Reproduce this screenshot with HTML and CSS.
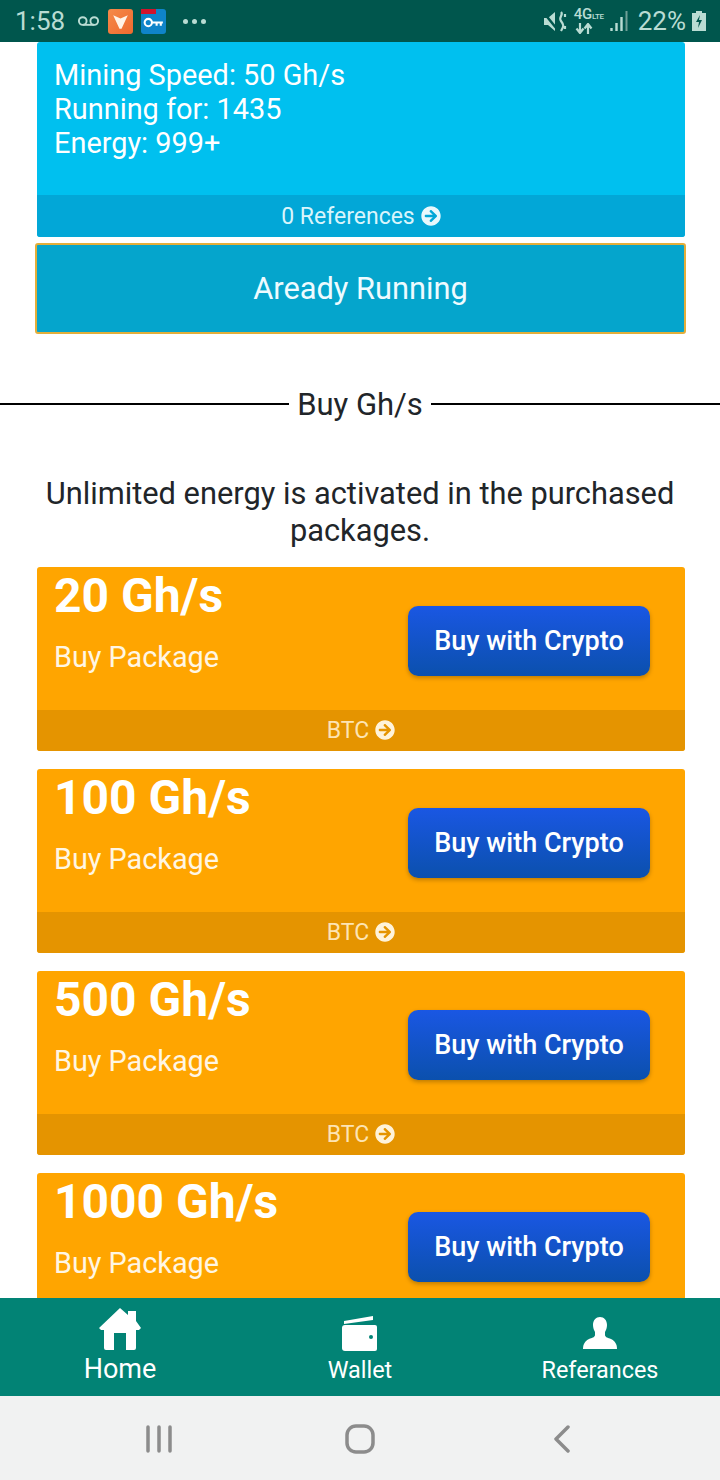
FILE: index.html
```html
<!DOCTYPE html>
<html lang="en">
<head>
<meta charset="utf-8">
<title>Mining</title>
<link rel="stylesheet" href="styles.css">
</head>
<body>
<div class="phone">
  <header class="status">
    <span class="time">1:58</span>
    <svg class="vm" viewBox="0 0 24 12"><circle cx="6" cy="6" r="4" /><circle cx="18" cy="6" r="4" /><path d="M6 10h12" /></svg>
    <span class="app app-orange"><svg viewBox="0 0 24 24"><path d="M5 6l7 3 7-3-6 13h-2z" fill="#fff3e8"/></svg></span>
    <span class="app app-blue"><i class="tag"></i><svg viewBox="0 0 24 24"><circle cx="7" cy="13" r="3.500" fill="none" stroke="#fff" stroke-width="2"/><path d="M10 13h11M15 13v3M19 13v3" stroke="#fff" stroke-width="2" fill="none"/></svg></span>
    <span class="dots"><i></i><i></i><i></i></span>
    <span class="status-right">
      <svg class="mute" viewBox="0 0 23 21"><path d="M0 7h4l7-6v19l-7-6H0z" fill="#b9dcd3"/><path d="M0 2l13 16" stroke="#00564d" stroke-width="2.500"/><path d="M17 1c3 3-3 5 0 9s3 5 0 10M21 3v3M21 15v3" stroke="#b9dcd3" stroke-width="2.200" fill="none"/></svg>
      <span class="net"><span class="net-top">4G<small>LTE</small></span><svg class="net-arrows" viewBox="0 0 18 11"><path d="M5 0v9M1.500 5.500L5 10l3.500-4.500M13 11V2M9.500 5.500L13 1l3.500 4.500" fill="none" stroke="#b9dcd3" stroke-width="2.200"/></svg></span>
      <svg class="signal" viewBox="0 0 18 20"><path d="M1.500 17v3M6.500 12v8M11.500 6v14" stroke="#b9dcd3" stroke-width="2.400"/><path d="M16.500 0v20" stroke="#6f9f97" stroke-width="2"/></svg>
      <span class="pct">22%</span>
      <svg class="batt" viewBox="0 0 14 20"><path d="M4 0h6v2h4v18H0V2h4z" fill="#b9dcd3"/><path d="M8 4l-4 7h3l-1 6 4-8H7z" fill="#00564d"/></svg>
    </span>
  </header>

  <main class="content">
    <section class="card card-blue">
      <div class="stats">
        <div>Mining Speed: 50 Gh/s</div>
        <div>Running for: 1435</div>
        <div>Energy: 999+</div>
      </div>
      <div class="card-foot foot-blue">0 References
        <svg class="arrow" viewBox="0 0 512 512"><path d="M256 8c137 0 248 111 248 248S393 504 256 504 8 393 8 256 119 8 256 8zm-28.900 143.600l75.500 72.400H120c-13.300 0-24 10.700-24 24v16c0 13.300 10.700 24 24 24h182.600l-75.500 72.400c-9.700 9.300-9.900 24.800-.4 34.300l11 10.900c9.400 9.400 24.600 9.400 33.900 0L404.300 273c9.400-9.400 9.400-24.600 0-33.900L271.600 106.300c-9.400-9.400-24.600-9.400-33.900 0l-11 10.900c-9.500 9.700-9.300 25.200.4 34.400z"/></svg>
      </div>
    </section>
    <div class="running">Aready Running</div>
    <div class="divider"><span>Buy Gh/s</span></div>
    <p class="notice">Unlimited energy is activated in the purchased packages.</p>

    <section class="card card-orange">
      <div class="pack">
        <div class="pack-info"><h2>20 Gh/s</h2><p>Buy Package</p></div>
        <button class="buy">Buy with Crypto</button>
      </div>
      <div class="card-foot foot-orange">BTC
        <svg class="arrow" viewBox="0 0 512 512"><path d="M256 8c137 0 248 111 248 248S393 504 256 504 8 393 8 256 119 8 256 8zm-28.900 143.600l75.500 72.400H120c-13.300 0-24 10.700-24 24v16c0 13.300 10.700 24 24 24h182.600l-75.500 72.400c-9.700 9.300-9.900 24.800-.4 34.300l11 10.900c9.400 9.400 24.600 9.400 33.900 0L404.300 273c9.400-9.400 9.400-24.600 0-33.900L271.600 106.300c-9.400-9.400-24.600-9.400-33.900 0l-11 10.900c-9.500 9.700-9.300 25.200.4 34.400z"/></svg>
      </div>
    </section>
    <section class="card card-orange">
      <div class="pack">
        <div class="pack-info"><h2>100 Gh/s</h2><p>Buy Package</p></div>
        <button class="buy">Buy with Crypto</button>
      </div>
      <div class="card-foot foot-orange">BTC
        <svg class="arrow" viewBox="0 0 512 512"><path d="M256 8c137 0 248 111 248 248S393 504 256 504 8 393 8 256 119 8 256 8zm-28.900 143.600l75.500 72.400H120c-13.300 0-24 10.700-24 24v16c0 13.300 10.700 24 24 24h182.600l-75.500 72.400c-9.700 9.300-9.900 24.800-.4 34.300l11 10.900c9.400 9.400 24.600 9.400 33.900 0L404.300 273c9.400-9.400 9.400-24.600 0-33.900L271.600 106.300c-9.400-9.400-24.600-9.400-33.900 0l-11 10.900c-9.500 9.700-9.300 25.200.4 34.400z"/></svg>
      </div>
    </section>
    <section class="card card-orange">
      <div class="pack">
        <div class="pack-info"><h2>500 Gh/s</h2><p>Buy Package</p></div>
        <button class="buy">Buy with Crypto</button>
      </div>
      <div class="card-foot foot-orange">BTC
        <svg class="arrow" viewBox="0 0 512 512"><path d="M256 8c137 0 248 111 248 248S393 504 256 504 8 393 8 256 119 8 256 8zm-28.900 143.600l75.500 72.400H120c-13.300 0-24 10.700-24 24v16c0 13.300 10.700 24 24 24h182.600l-75.500 72.400c-9.700 9.300-9.900 24.800-.4 34.300l11 10.900c9.400 9.400 24.600 9.400 33.900 0L404.300 273c9.400-9.400 9.400-24.600 0-33.900L271.600 106.300c-9.400-9.400-24.600-9.400-33.900 0l-11 10.900c-9.500 9.700-9.300 25.200.4 34.400z"/></svg>
      </div>
    </section>
    <section class="card card-orange">
      <div class="pack">
        <div class="pack-info"><h2>1000 Gh/s</h2><p>Buy Package</p></div>
        <button class="buy">Buy with Crypto</button>
      </div>
    </section>
  </main>

  <nav class="tabs">
    <a class="tab tab-active">
      <svg viewBox="0 0 44 44"><path d="M22 0l8 7V3h8v10l5 7-2 2h-3v18a2 2 0 0 1-2 2h-8V25H16v17H8a2 2 0 0 1-2-2V22H3l-2-2z" fill="#fff"/></svg>
      <span>Home</span>
    </a>
    <a class="tab">
      <svg viewBox="0 0 44 44"><path d="M6 13l29-5v4L6 16z" fill="#fff"/><path d="M7 17h30a2 2 0 0 1 2 2v22a2 2 0 0 1-2 2H7a3 3 0 0 1-3-3V20a3 3 0 0 1 3-3z" fill="#fff"/><circle cx="33" cy="29" r="2" fill="#028375"/></svg>
      <span>Wallet</span>
    </a>
    <a class="tab">
      <svg viewBox="0 0 44 44"><path d="M22 9c4 0 7 3 7 8 0 3-1 5-2 7v3c0 2 3 3 6 4 4 2 6 5 6 10H5c0-5 2-8 6-10 3-1 6-2 6-4v-3c-1-2-2-4-2-7 0-5 3-8 7-8z" fill="#fff"/></svg>
      <span>Referances</span>
    </a>
  </nav>

  <footer class="sysnav">
    <svg class="sys-recent" viewBox="0 0 28 28"><path d="M3 2v24M14 2v24M25 2v24" /></svg>
    <svg class="sys-home" viewBox="0 0 30 30"><rect x="2" y="2" width="26" height="26" rx="9" /></svg>
    <svg class="sys-back" viewBox="0 0 20 28"><path d="M16 2L4 14l12 12" /></svg>
  </footer>
</div>
</body>
</html>
```
FILE: styles.css
```css
* { box-sizing: border-box; }
html, body { margin: 0; padding: 0; }
body { font-family: Roboto, "Liberation Sans", sans-serif; background: #fff; color: #212529; }
.phone { width: 720px; height: 1480px; display: flex; flex-direction: column; overflow: hidden; }

.status { height: 42px; flex: none; background: #00564d; color: #b9dcd3; display: flex; align-items: center; padding: 0 14px 0 15px; }
.time { font-size: 26px; width: 62px; }
.vm { width: 23px; height: 12px; fill: none; stroke: #b9dcd3; stroke-width: 2; margin-right: 8px; }
.app { width: 25px; height: 25px; border-radius: 3px; margin-right: 8px; position: relative; display: block; }
.app svg { display: block; width: 25px; height: 25px; }
.app-orange { background: linear-gradient(135deg, #f58a4a, #ee6a2f); }
.app-blue { background: #0f84c9; }
.tag { position: absolute; left: 0; top: 0; width: 15px; height: 5px; background: #d3132b; }
.dots { display: flex; gap: 4px; margin-left: 9px; }
.dots i { width: 5px; height: 5px; border-radius: 50%; background: #b9dcd3; }
.status-right { margin-left: auto; display: flex; align-items: center; }
.mute { width: 23px; height: 21px; margin-right: 7px; }
.net { display: flex; flex-direction: column; align-items: flex-start; width: 30px; margin-right: 6px; }
.net-top { font-size: 15px; line-height: 13px; font-weight: 500; letter-spacing: -.3px; }
.net-top small { font-size: 8px; }
.net-arrows { display: block; width: 18px; height: 11px; margin-left: 1px; }
.signal { width: 18px; height: 20px; margin-right: 10px; }
.pct { font-size: 26px; margin-right: 6px; }
.batt { width: 14px; height: 20px; }

.content { flex: 1; min-height: 0; overflow: hidden; display: flex; flex-direction: column; }
.card { flex: none; width: 648px; margin: 0 35px 0 37px; border-radius: 3px; overflow: hidden; color: #fff; }
.card-blue { background: #00c0ef; }
.stats { height: 153px; padding: 16px 17px 0; font-size: 28.900px; line-height: 34px; }
.card-foot { height: 41px; display: flex; align-items: center; justify-content: center; gap: 6px; font-size: 23px; }
.foot-blue { height: 42px; background: #02a7d7; color: #d9f5fc; }
.foot-orange { background: #e59400; color: #fde4b4; }
.arrow { width: 20px; height: 20px; fill: #e8f8fc; margin-top: -1px; }
.foot-orange .arrow { fill: #fff3da; }

.running { flex: none; width: 651px; height: 91px; margin: 6px 34px 0 35px; background: #05a5cc; border: 2px solid #e3ae3a; border-radius: 3px; color: #eefbff; display: flex; align-items: center; justify-content: center; font-size: 30.800px; }

.divider { flex: none; margin-top: 52px; height: 36px; display: flex; align-items: center; gap: 8px; font-size: 31px; }
.divider::before, .divider::after { content: ""; flex: 1; height: 2px; background: #000; }

.notice { flex: none; margin: 53px 30px 18px; font-size: 30.800px; line-height: 37px; text-align: center; }

.card-orange { background: #ffa500; margin-bottom: 18px; }
.pack { height: 143px; padding: 0 35px 0 17px; display: flex; align-items: flex-start; justify-content: space-between; }
.pack-info h2 { margin: 0; font-size: 48px; line-height: 58px; font-weight: 700; }
.pack-info p { margin: 15px 0 0; font-size: 28.800px; line-height: 34px; color: #fff6e4; }
.buy { margin-top: 39px; width: 242px; height: 70px; border: 0; border-radius: 10px; background: linear-gradient(180deg, #1a57e3, #0b50ad); color: #fff; font-family: inherit; font-size: 27px; font-weight: 500; box-shadow: 0 2px 4px rgba(0,0,0,.25); }

.tabs { flex: none; height: 98px; background: #028375; display: flex; color: #fff; }
.tab { width: 240px; display: flex; flex-direction: column; align-items: center; padding-top: 10px; font-size: 23.400px; line-height: 30px; }
.tab svg { width: 44px; height: 44px; margin-bottom: 3px; flex: none; }
.tab-active { font-size: 27px; }
.tab-active svg { margin-bottom: 2px; }

.sysnav { flex: none; height: 84px; background: #f1f2f2; display: flex; align-items: center; padding-top: 2px; }
.sysnav svg { fill: none; stroke: #8c8c8c; stroke-width: 3.500; stroke-linecap: round; stroke-linejoin: round; }
.sys-recent { width: 28px; height: 28px; margin-left: 145px; }
.sys-home { width: 30px; height: 30px; margin-left: 172px; }
.sys-back { width: 20px; height: 28px; margin-left: 177px; }
```
